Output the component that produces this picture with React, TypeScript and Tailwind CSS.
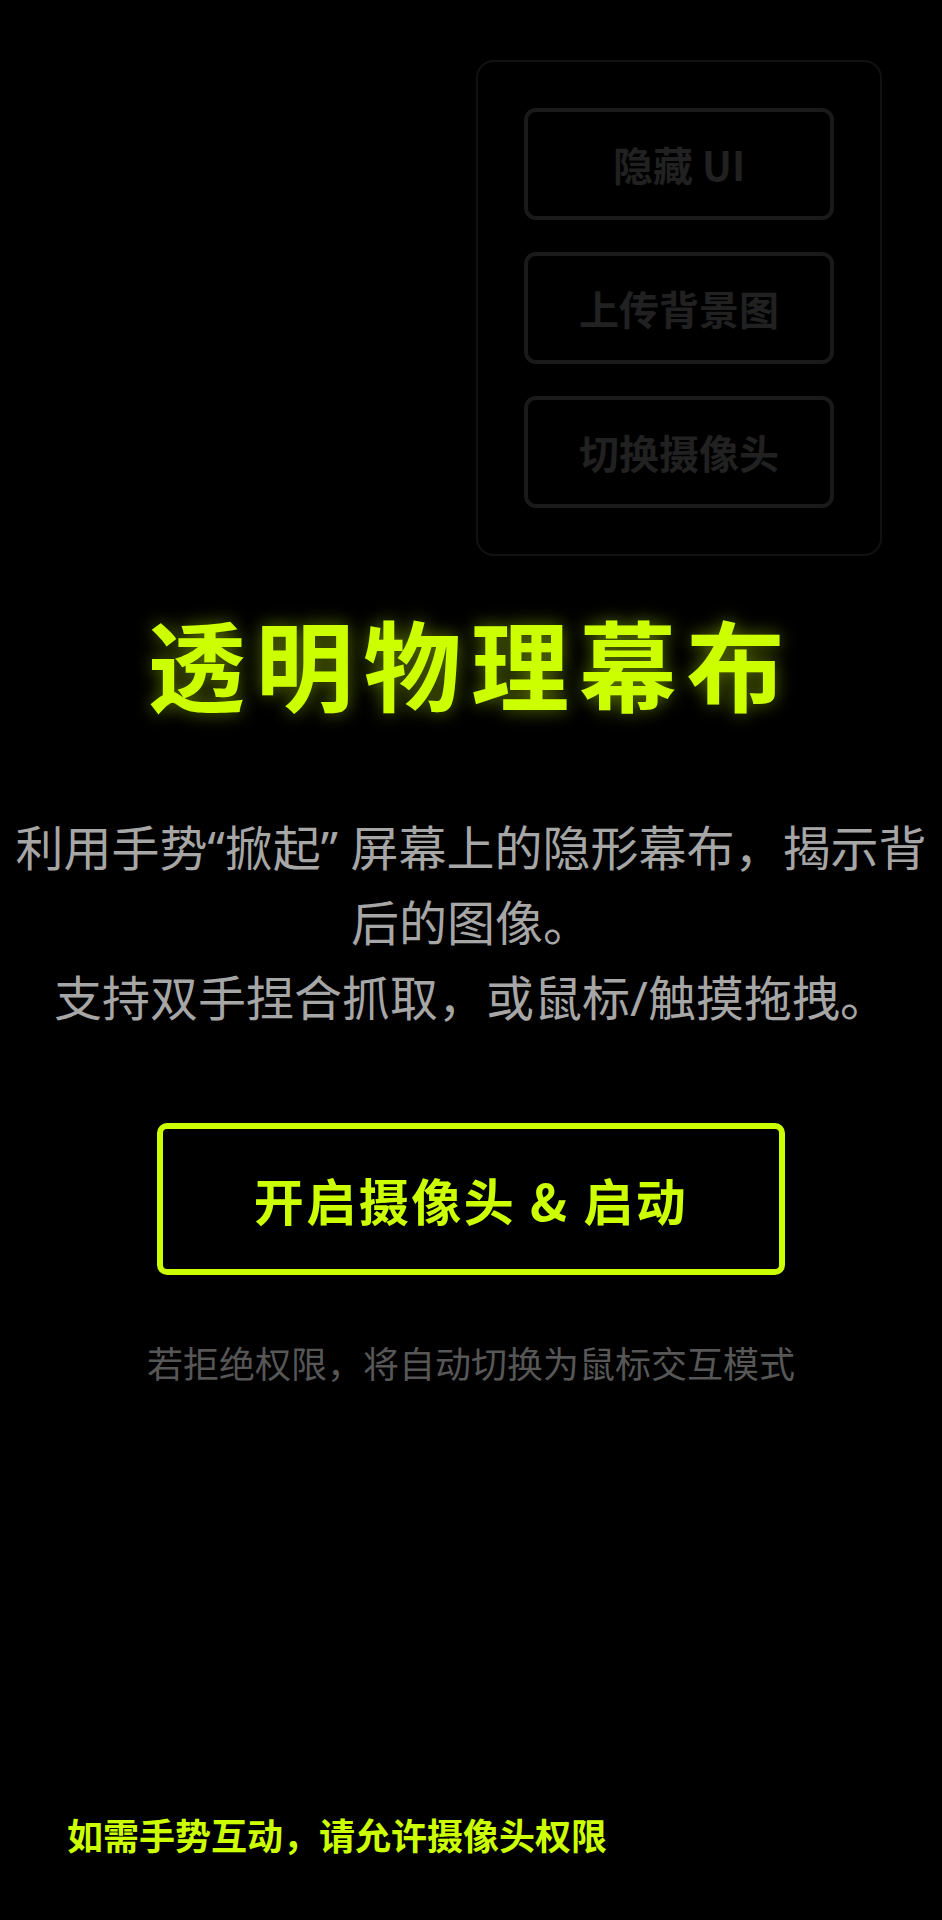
import React from "react";

function PanelButton({ label }: { label: string }) {
  return (
    <button className="h-[112px] w-full rounded-[12px] border-[4px] border-[#1a1a1a] bg-black font-['Noto_Sans_CJK_SC',sans-serif] text-[40px] font-bold text-[#212121]">
      {label}
    </button>
  );
}

export default function App() {
  return (
    <div className="min-h-[1920px] w-full bg-black flex flex-col font-['Noto_Sans_CJK_SC',sans-serif]">
      <div className="flex justify-end pt-[60px] pr-[60px]">
        <div className="w-[406px] rounded-[18px] border-[2px] border-[#111111] p-[46px] flex flex-col gap-[32px]">
          <PanelButton label="隐藏 UI" />
          <PanelButton label="上传背景图" />
          <PanelButton label="切换摄像头" />
        </div>
      </div>

      <h1 className="mt-[56px] text-center text-[98px] leading-none font-bold tracking-[0.1em] text-[#ccff00] [text-shadow:0_0_18px_rgba(204,255,0,0.45)]">
        透明物理幕布
      </h1>

      <p className="mt-[100px] text-center font-['Noto_Sans','Noto_Sans_CJK_SC',sans-serif] text-[48px] leading-[75px] text-[#a6a6a6]">
        利用手势“掀起” 屏幕上的隐形幕布，揭示背后的图像。
        <br />
        支持双手捏合抓取，或鼠标/触摸拖拽。
      </p>

      <div className="mt-[88px] flex justify-center">
        <button className="h-[152px] w-[628px] rounded-[10px] border-[6px] border-[#ccff00] bg-black text-[50px] font-bold tracking-[0.05em] text-[#ccff00]">
          开启摄像头 &amp; 启动
        </button>
      </div>

      <p className="mt-[60px] text-center text-[36px] leading-[54px] text-[#575757]">
        若拒绝权限，将自动切换为鼠标交互模式
      </p>

      <div className="mt-auto pb-[66px] pl-[67px]">
        <p className="text-[36px] leading-[40px] font-bold text-[#ccff00]">
          如需手势互动，请允许摄像头权限
        </p>
      </div>
    </div>
  );
}
